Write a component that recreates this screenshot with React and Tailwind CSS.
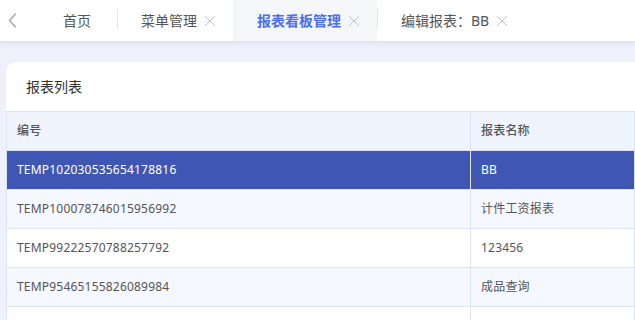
import { X } from "lucide-react";

const tabs = [
  { title: "首页", closable: false },
  { title: "菜单管理", closable: true },
  { title: "报表看板管理", closable: true, active: true },
  { title: "编辑报表：BB", closable: true },
];

const rows = [
  { code: "TEMP102030535654178816", name: "BB" },
  { code: "TEMP100078746015956992", name: "计件工资报表" },
  { code: "TEMP99222570788257792", name: "123456" },
  { code: "TEMP95465155826089984", name: "成品查询" },
  { code: "", name: "" },
];

export default function App() {
  const selected = 0;

  return (
    <div
      className="w-[635px] h-[320px] overflow-hidden bg-[#eef0fb] flex flex-col"
      style={{ fontFamily: '"Noto Sans", "Noto Sans CJK SC", sans-serif' }}
    >
      {/* 标签栏 */}
      <div className="h-[41px] shrink-0 bg-white flex items-stretch shadow-[0_2px_4px_rgba(200,205,235,0.5)] relative z-10">
        <div className="w-[39px] flex items-center pl-[8px] text-[#a3a8b3]">
          <svg width="9" height="15" viewBox="0 0 9 15" fill="none" stroke="currentColor" strokeWidth="1.5" strokeLinecap="round" strokeLinejoin="round">
            <path d="M7.5 1 L1.5 7.5 L7.5 14" />
          </svg>
        </div>
        {tabs.map((tab, i) => {
          const showDivider = i > 0 && !tab.active;
          return (
            <div
              key={tab.title}
              className={[
                "relative flex items-center pl-6 text-[14px]",
                tab.closable ? "pr-[14px]" : "pr-[26px]",
                tab.active ? "bg-[#f5f6f8] text-[#4e6ef2] font-semibold" : "text-[#555]",
              ].join(" ")}
            >
              {showDivider && (
                <span className="absolute left-0 top-[9px] h-[19px] w-px bg-[#e6e6e6]" />
              )}
              <span>{tab.title}</span>
              {tab.closable && (
                <X size={18} strokeWidth={1.2} className="ml-[4px] text-[#b8bcc4]" />
              )}
            </div>
          );
        })}
      </div>

      {/* 内容 */}
      <div className="flex-1 pl-[6px] pt-[21px]">
        <div className="h-full bg-white rounded-tl-[10px] flex flex-col">
          <div className="h-[49px] shrink-0 flex items-center pl-5 text-[14px] text-[#333]">
            报表列表
          </div>
          <table className="w-full border-collapse text-[12px] tracking-[0.2px] table-fixed">
            <colgroup>
              <col className="w-[464px]" />
              <col />
            </colgroup>
            <thead>
              <tr className="h-[39px] bg-[#f0f4fd] text-[#555]">
                <th className="border border-[#dbe3f7] text-left pl-[10px] font-medium">编号</th>
                <th className="border border-[#dbe3f7] text-left pl-[10px] font-medium">报表名称</th>
              </tr>
            </thead>
            <tbody>
              {rows.map((row, i) => {
                const isSel = i === selected;
                const bg = isSel ? "bg-[#3f57b3] text-white" : i % 2 === 1 ? "bg-[#f5f8ff] text-[#555]" : "bg-white text-[#555]";
                return (
                  <tr key={i} className={`h-[39px] ${bg}`}>
                    <td className={`border border-[#dbe3f7] pl-[10px] ${isSel ? "border-r-[#e4eafb]" : ""}`}>{row.code}</td>
                    <td className={`border border-[#dbe3f7] pl-[10px] ${isSel ? "border-l-[#e4eafb]" : ""}`}>{row.name}</td>
                  </tr>
                );
              })}
            </tbody>
          </table>
        </div>
      </div>
    </div>
  );
}
